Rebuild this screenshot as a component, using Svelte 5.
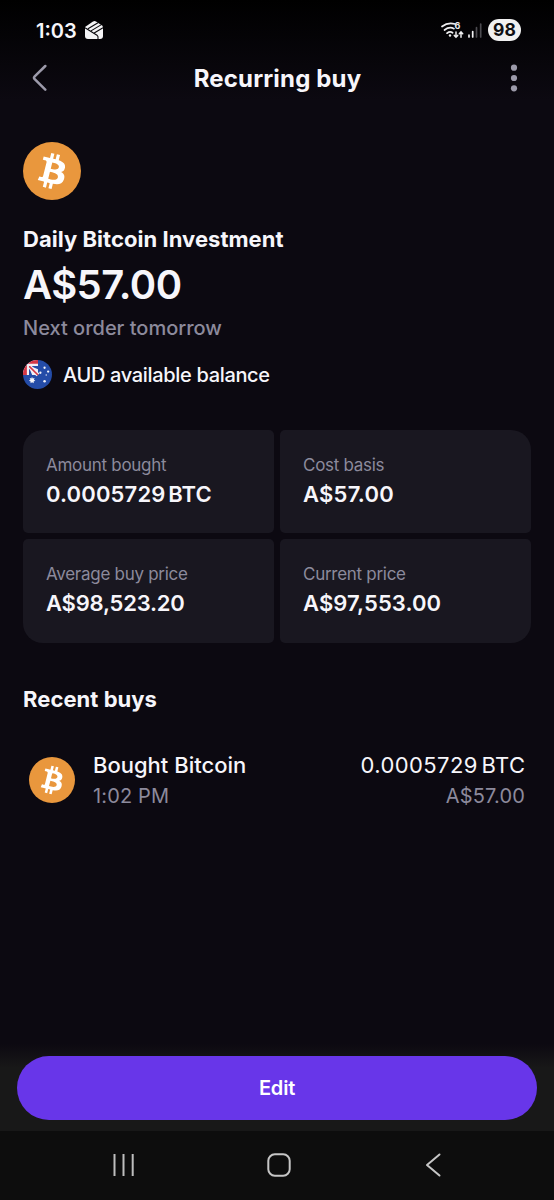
<script lang="ts">
  type Stat = { id: string; label: string; value: string };

  const stats: Stat[] = [
    { id: "amount", label: "Amount bought", value: "0.0005729 BTC" },
    { id: "basis", label: "Cost basis", value: "A$57.00" },
    { id: "average", label: "Average buy price", value: "A$98,523.20" },
    { id: "current", label: "Current price", value: "A$97,553.00" },
  ];

  const buys = [
    { title: "Bought Bitcoin", time: "1:02 PM", amount: "0.0005729 BTC", cost: "A$57.00" },
  ];
</script>

{#snippet bitcoin()}
  <svg class="coin" viewBox="0 0 32 32" aria-hidden="true">
    <circle cx="16" cy="16" r="16" fill="#e9973d" />
    <path
      fill="#fff"
      d="M23.189 14.02c.314-2.096-1.283-3.223-3.465-3.975l.708-2.84-1.728-.43-.69 2.765c-.454-.114-.92-.22-1.385-.326l.695-2.783L15.596 6l-.708 2.839c-.376-.086-.746-.17-1.104-.26l.002-.009-2.384-.595-.46 1.846s1.283.294 1.256.312c.7.175.826.638.805 1.006l-.806 3.235c.048.012.11.03.18.057l-.183-.045-1.13 4.532c-.086.212-.303.531-.793.41.018.025-1.256-.313-1.256-.313l-.858 1.978 2.25.561c.418.105.828.215 1.231.318l-.715 2.872 1.727.43.708-2.84c.472.127.93.245 1.378.357l-.706 2.828 1.728.43.715-2.866c2.948.558 5.164.333 6.097-2.333.752-2.146-.037-3.385-1.588-4.192 1.13-.26 1.98-1.003 2.207-2.538zm-3.95 5.538c-.533 2.147-4.148.986-5.32.695l.95-3.805c1.172.293 4.929.872 4.37 3.11zm.535-5.569c-.487 1.953-3.495.96-4.47.717l.86-3.45c.975.243 4.118.696 3.61 2.733z"
    />
  </svg>
{/snippet}

<div class="screen">
  <div class="status">
    <span class="clock">1:03</span>
    <svg class="app-mark" width="20" height="20" viewBox="0 0 20 20" aria-hidden="true">
      <path fill="#f4f4f6" d="M1 7 9 1.500Q10.500 .6 12 1.500L18 5.500Q19 6.300 19 7.500V16Q19 19 16 19H4Q1 19 1 16Z" />
      <g fill="none" stroke="#08070b" stroke-width="1.100">
        <path d="M1 7.800 13 15.200Q14.500 16.500 14 19" />
        <path d="M4 8.800 14 2.700M7 10.900 17 4.900M10.200 13 19 7.700" />
      </g>
    </svg>
    <div class="signals">
      <svg width="23" height="20" viewBox="0 0 23 20" aria-hidden="true">
        <g fill="none" stroke="#eeeef0" stroke-width="1.700" stroke-linecap="round">
          <path d="M1 6.500Q7 1.800 14 4" />
          <path d="M3.500 10Q8.500 6.200 13 8.700" />
          <path d="M6 13.200Q9 11 11.600 12.800" />
          <path d="M15 12V17M13.300 15.400 15 17.200 16.700 15.400" stroke-width="1.500" />
          <path d="M20 17.200V12M18.300 13.700 20 11.900 21.700 13.700" stroke-width="1.500" />
        </g>
        <circle cx="9" cy="15.500" r="1.200" fill="#eeeef0" />
        <text class="band" x="13.600" y="8.800">6</text>
      </svg>
      <svg class="bars" width="14" height="15" viewBox="0 0 14 15" aria-hidden="true">
        <path d="M1 12.200V14M4.700 8.600V14" stroke="#f1f1f3" stroke-width="1.700" stroke-linecap="round" />
        <path d="M8.500 4.700V14M12.700 1V14" stroke="#4c4b50" stroke-width="1.700" stroke-linecap="round" />
      </svg>
      <span class="battery">98</span>
    </div>
  </div>

  <header>
    <button class="icon-button" type="button" aria-label="Back">
      <svg width="16" height="28" viewBox="0 0 16 28">
        <path d="M13.300 2 2.700 12.400Q1.300 13.800 2.700 15.200L13.300 25.600" fill="none" stroke="#9c9aaa" stroke-width="2.500" stroke-linecap="round" />
      </svg>
    </button>
    <h1>Recurring buy</h1>
    <button class="icon-button" type="button" aria-label="More options">
      <svg width="8" height="28" viewBox="0 0 8 28" fill="#9c9aaa">
        <circle cx="4" cy="3.700" r="3.100" />
        <circle cx="4" cy="14" r="3.100" />
        <circle cx="4" cy="24.300" r="3.100" />
      </svg>
    </button>
  </header>

  <main>
    <section class="summary">
      {@render bitcoin()}
      <h2 class="name">Daily Bitcoin Investment</h2>
      <p class="total">A$57.00</p>
      <p class="next">Next order tomorrow</p>
      <div class="source">
        <svg width="29" height="29" viewBox="0 0 30 30" aria-hidden="true">
          <clipPath id="flag"><circle cx="15" cy="15" r="15" /></clipPath>
          <g clip-path="url(#flag)">
            <rect width="30" height="30" fill="#244ca8" />
            <rect width="15.500" height="15.500" fill="#f2eff5" />
            <path d="M0 0H15.500V4H4V15.500H0Z" fill="#d53745" />
            <path d="M7.500 6.200H15.500V9.500M6.200 7.500V15.500H9.500" fill="#244ca8" />
            <path d="M5.500 5.500 15.500 15.500" stroke="#f2eff5" stroke-width="4" />
            <path d="M6 6 15.500 15.500" stroke="#d53745" stroke-width="1.700" />
            <path d="M5 5.400H15.500M5.400 5V15.500" stroke="#f2eff5" stroke-width="1.500" />
          </g>
          <g fill="#f5f5fa">
            <path d="m9.300 17.400.8 1.700 1.900-.5-.7 1.800 1.500 1.100-1.800.7.1 1.900-1.700-1-1.600 1 .1-1.900-1.800-.7 1.500-1.100-.7-1.800 1.800.5z" />
            <circle cx="22.300" cy="8" r="1.200" />
            <circle cx="18" cy="13.200" r="1.200" />
            <circle cx="26" cy="12" r="1.200" />
            <circle cx="24" cy="15.500" r=".7" />
            <circle cx="22.300" cy="22" r="1.300" />
          </g>
        </svg>
        <span>AUD available balance</span>
      </div>
    </section>

    <section class="stats">
      {#each stats as stat (stat.id)}
        <div class="stat">
          <span class="label">{stat.label}</span>
          <span class="value {stat.id}">{stat.value}</span>
        </div>
      {/each}
    </section>

    <section class="recent">
      <h2>Recent buys</h2>
      {#each buys as buy}
        <div class="buy">
          {@render bitcoin()}
          <div class="lines">
            <span class="primary">{buy.title}</span>
            <span class="secondary">{buy.time}</span>
          </div>
          <div class="lines end">
            <span class="primary amount">{buy.amount}</span>
            <span class="secondary">{buy.cost}</span>
          </div>
        </div>
      {/each}
    </section>
  </main>

  <footer>
    <button class="edit" type="button">Edit</button>
  </footer>

  <nav aria-label="System navigation">
    <svg width="24" height="24" viewBox="0 0 24 24">
      <path d="M2.500 1V23M11.500 1V23M20.700 1V23" stroke="#bdbdbd" stroke-width="2" />
    </svg>
    <svg width="24" height="24" viewBox="0 0 24 24">
      <rect x="1.300" y="1.300" width="21.400" height="21.400" rx="6.500" fill="none" stroke="#c6c6c6" stroke-width="2" />
    </svg>
    <svg width="24" height="24" viewBox="0 0 24 24">
      <path d="M18.500 1.500 6 12 18.500 22.500" fill="none" stroke="#c6c6c6" stroke-width="2" stroke-linecap="round" stroke-linejoin="round" />
    </svg>
  </nav>
</div>

<style>
  :global(body) {
    background: #0c0911;
  }

  .screen {
    box-sizing: border-box;
    display: flex;
    flex-direction: column;
    height: 1200px;
    overflow: hidden;
    background: linear-gradient(#000 0, #0c0911 100px);
    color: #f7f6fb;
    font-family: Inter, "Liberation Sans", sans-serif;
    white-space: nowrap;
  }

  h1,
  h2,
  p {
    margin: 0;
  }

  button {
    padding: 0;
    border: 0;
    background: none;
    color: inherit;
    font: inherit;
    cursor: pointer;
  }

  svg {
    display: block;
    flex: none;
  }

  .status {
    display: flex;
    align-items: center;
    height: 60px;
    padding: 0 33px 0 36px;
  }

  .clock {
    width: 48px;
    font-size: 20px;
    font-weight: 600;
    line-height: 22px;
    padding-top: 1px;
  }

  .signals {
    display: flex;
    align-items: center;
    margin-left: auto;
  }

  .band {
    font-size: 9px;
    font-weight: 700;
    fill: #eeeef0;
  }

  .bars {
    margin: 0 6px 0 4px;
  }

  .battery {
    width: 33px;
    border-radius: 11px;
    background: #f1f1f1;
    color: #101013;
    font-size: 17.5px;
    font-weight: 700;
    line-height: 22px;
    text-align: center;
  }

  header {
    display: flex;
    align-items: center;
    justify-content: space-between;
    height: 36px;
    padding: 0 36px 0 32px;
  }

  h1 {
    margin: 2px 3px 0 0;
    font-size: 24px;
    font-weight: 700;
    letter-spacing: 0.16px;
    line-height: 36px;
  }

  main {
    flex: 1;
    padding: 46px 23px 0;
  }

  .summary .coin {
    width: 58px;
    height: 58px;
  }

  .name {
    margin-top: 24px;
    font-size: 22px;
    font-weight: 700;
    letter-spacing: 0.04px;
    line-height: 30px;
  }

  .total {
    padding-top: 1px;
    font-size: 40px;
    font-weight: 600;
    letter-spacing: -0.55px;
    line-height: 60px;
  }

  .next {
    color: #8c8a9c;
    font-size: 20px;
    font-weight: 500;
    line-height: 26px;
  }

  .source {
    display: flex;
    align-items: center;
    gap: 11px;
    height: 30px;
    margin-top: 18px;
    font-size: 20px;
    font-weight: 500;
    letter-spacing: -0.33px;
  }

  .source span {
    padding-top: 1px;
  }

  .stats {
    display: grid;
    grid-template-columns: 1fr 1fr;
    gap: 6px;
    margin-top: 40.5px;
    border-radius: 20px;
    overflow: hidden;
  }

  .stat {
    display: flex;
    flex-direction: column;
    box-sizing: border-box;
    height: 103.5px;
    padding: 22px 23px;
    border-radius: 5px;
    background: #191720;
  }

  .label {
    color: #8c8a9c;
    font-size: 17px;
    letter-spacing: -0.28px;
    line-height: 26px;
  }

  .value {
    font-size: 22px;
    font-weight: 600;
    line-height: 33px;
  }

  .value.amount {
    letter-spacing: 0.15px;
    word-spacing: -3px;
  }

  .value.basis {
    letter-spacing: 0.25px;
  }

  .value.average {
    letter-spacing: -0.2px;
  }

  .value.current {
    letter-spacing: 0.1px;
  }

  .recent h2 {
    margin-top: 41px;
    font-size: 22px;
    font-weight: 700;
    letter-spacing: 0.05px;
    line-height: 30px;
  }

  .buy {
    display: flex;
    align-items: center;
    padding: 35px 6px 0;
  }

  .buy .coin {
    width: 46px;
    height: 46px;
  }

  .lines {
    display: flex;
    flex-direction: column;
    margin-left: 18px;
  }

  .lines.end {
    align-items: flex-end;
    margin-left: auto;
  }

  .primary {
    font-size: 22px;
    font-weight: 500;
    line-height: 32px;
  }

  .primary.amount {
    font-weight: 400;
    letter-spacing: 0.4px;
    margin-right: -0.4px;
    word-spacing: -3px;
  }

  .secondary {
    color: #8c8a9c;
    font-size: 20px;
    letter-spacing: 0.15px;
    line-height: 30px;
  }

  footer {
    box-sizing: border-box;
    height: 87px;
    padding: 12px 17px 11px;
    background: linear-gradient(#0c0911 0, #181818 24px);
  }

  .edit {
    display: block;
    width: 100%;
    height: 64px;
    border-radius: 32px;
    background: #6836e9;
    color: #fff;
    font-size: 20px;
    font-weight: 600;
    letter-spacing: -0.2px;
    line-height: 64px;
  }

  nav {
    display: flex;
    align-items: center;
    justify-content: space-between;
    height: 69px;
    box-sizing: border-box;
    padding: 0 109px 2px 112px;
    background: #0d0d0d;
  }
</style>
